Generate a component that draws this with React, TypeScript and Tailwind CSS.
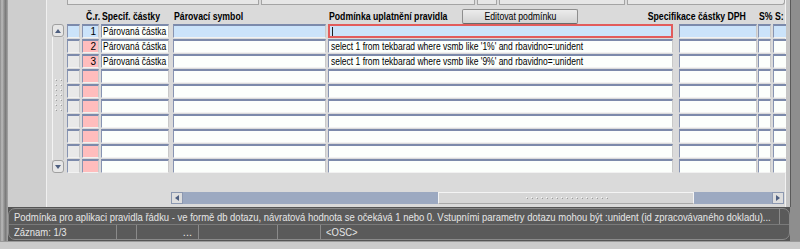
import React from 'react'

const font = "font-['Liberation_Sans',Arial,sans-serif]"

const rows = [
  { n: '1', spec: 'Párovaná částka', cond: '' },
  { n: '2', spec: 'Párovaná částka', cond: "select 1 from tekbarad where vsmb like '1%' and rbavidno=:unident" },
  { n: '3', spec: 'Párovaná částka', cond: "select 1 from tekbarad where vsmb like '9%' and rbavidno=:unident" },
  { n: '', spec: '', cond: '' },
  { n: '', spec: '', cond: '' },
  { n: '', spec: '', cond: '' },
  { n: '', spec: '', cond: '' },
  { n: '', spec: '', cond: '' },
  { n: '', spec: '', cond: '' },
  { n: '', spec: '', cond: '' },
]

const field = 'h-[14px] shrink-0 border-t-2 border-l border-b border-r border-t-[#7c8aab] border-l-[#8794b2] border-b-[#f2f2f2] border-r-[#c9c9c9] overflow-hidden whitespace-nowrap text-[10px] leading-[11px] text-black'

// the old client draws a narrow sans, so plain Arial metrics get squeezed
const N: React.FC<{ children: React.ReactNode; origin?: string; sx?: string }> = ({ children, origin = 'origin-left', sx = 'scale-x-[0.85]' }) => (
  <span className={`inline-block whitespace-nowrap ${sx} ${origin}`}>{children}</span>
)

const Arrow: React.FC<{ dir: 'up' | 'down' | 'left' | 'right' }> = ({ dir }) => {
  const d = {
    up: 'M0 4 L3 0 L6 4 Z',
    down: 'M0 0 L6 0 L3 4 Z',
    left: 'M4 0 L4 6 L0 3 Z',
    right: 'M0 0 L0 6 L4 3 Z',
  }[dir]
  const vb = dir === 'up' || dir === 'down' ? '0 0 6 4' : '0 0 4 6'
  const size = dir === 'up' || dir === 'down' ? 'w-[6px] h-[4px]' : 'w-[4px] h-[6px]'
  return (
    <svg viewBox={vb} className={size}>
      <path d={d} fill="#4e5f80" />
    </svg>
  )
}

const Grip: React.FC<{ className: string }> = ({ className }) => (
  <div className={`${className} bg-[radial-gradient(circle,#f8f8f8_0.8px,transparent_1px),radial-gradient(circle,#9c9c9c_0.8px,transparent_1px)] bg-[length:5px_5px,5px_5px] bg-[position:0_0,1px_1px]`} />
)

const TableRow: React.FC<{ r: typeof rows[number]; i: number }> = ({ r, i }) => {
  const sel = i === 0
  const blue = 'bg-[#cbe3fa]'
  return (
    <div className="flex h-[15px]">
      <div className={`${field} w-[13px] ${sel ? blue : 'bg-[#e9e9e9]'}`} />
      <div className={`${field} w-[17px] ml-[2px] text-right pr-[2px] ${sel ? blue : 'bg-[#ffbdbd]'}`}>{r.n}</div>
      <div className={`${field} w-[68px] ml-[2px] pl-[1px] bg-[#fcfffc]`}>{r.spec && <N>{r.spec}</N>}</div>
      <div className={`${field} w-[153px] ml-[4px] ${sel ? blue : 'bg-[#fcfffc]'}`} />
      {sel ? (
        <div className="h-[14px] w-[345px] ml-[2px] shrink-0 border-2 border-[#e25c5c] bg-[#cbe3fa] flex items-center pl-[2px]">
          <div className="w-[1px] h-[9px] bg-[#202020]" />
        </div>
      ) : (
        <div className={`${field} w-[345px] ml-[2px] pl-[2px] bg-[#fcfffc]`}>{r.cond && <N>{r.cond}</N>}</div>
      )}
      <div className={`${field} w-[78px] ml-[6px] ${sel ? blue : 'bg-[#fcfffc]'}`} />
      <div className={`${field} w-[13px] ml-[1px] ${sel ? blue : 'bg-[#fcfffc]'}`} />
      <div className={`${field} w-[14px] ml-[2px] ${sel ? blue : 'bg-[#fcfffc]'}`} />
    </div>
  )
}

const App: React.FC = () => {
  const hx = 'scale-x-[0.87]'
  const sx = 'scale-x-[0.86]'
  return (
    <div className={`${font} w-[800px] h-[249px] overflow-hidden flex flex-col bg-[#cbcbcb]`}>
      <div className="flex h-[207px]">
        <div className="w-[8px] bg-[linear-gradient(to_right,#8a8a8a,#bcbcbc_25%,#9a9a9a_45%,#7a7a7a_70%,#a8a8a8)]" />
        <div className="w-[39px] bg-[#cecece] border-r border-[#f0f0f0]" />
        <div className="w-[739px] bg-[#dadada] border-r border-[#f2f2f2] flex flex-col">
          <div className="flex h-[5px] pl-[20px]">
            <div className="w-[192px] border-b border-r border-l border-[#a4a4a4] bg-[#e6e6e6]" />
            <div className="w-[214px] ml-[2px] border-b border-r border-l border-[#a4a4a4] bg-[#e6e6e6]" />
            <div className="w-[20px] ml-[2px] border-b border-r border-l border-[#a4a4a4] bg-[#e6e6e6]" />
            <div className="w-[126px] ml-[2px] border-b border-r border-l border-[#a4a4a4] bg-[#e6e6e6]" />
            <div className="w-[158px] ml-[2px] border-b border-r border-l border-[#a4a4a4] bg-[#e6e6e6] rounded-br-[3px]" />
          </div>
          <div className="flex h-[15px] mt-[4px] pl-[21px] text-[10px] leading-[15px] font-bold text-black whitespace-nowrap">
            <div className="w-[13px] shrink-0" />
            <div className="w-[17px] ml-[2px] shrink-0 text-right"><N origin="origin-right" sx={hx}>Č.r.</N></div>
            <div className="w-[68px] ml-[2px] shrink-0"><N sx={hx}>Specif. částky</N></div>
            <div className="w-[153px] ml-[4px] shrink-0"><N sx={hx}>Párovací symbol</N></div>
            <div className="w-[345px] ml-[2px] shrink-0 flex">
              <span className="w-[133px] shrink-0"><N sx={hx}>Podmínka uplatnění pravidla</N></span>
              <button className="w-[116px] h-[15px] shrink-0 border border-[#8e8e8e] border-b-[#6a6a6a] rounded-[2px] bg-[linear-gradient(#ececec,#d2d2d2)] font-normal text-[10px] leading-[13px] text-black">
                <N origin="origin-center" sx={hx}>Editovat podmínku</N>
              </button>
            </div>
            <div className="w-[78px] ml-[6px] shrink-0 flex justify-end pr-[12px]">
              <N origin="origin-right" sx={hx}>Specifikace částky DPH</N>
            </div>
            <div className="w-[13px] ml-[1px] shrink-0 flex justify-center"><N origin="origin-center" sx={hx}>S%</N></div>
            <div className="w-[14px] ml-[2px] shrink-0 overflow-hidden pl-[1px]"><N sx={hx}>S:</N></div>
          </div>
          <div className="flex">
            <div className="w-[13px] ml-[5px] h-[149px] flex flex-col">
              <div className="h-[13px] rounded-[3px] border border-[#a0a0a0] bg-[#e6e6e6] flex items-center justify-center">
                <Arrow dir="up" />
              </div>
              <div className="flex-1 border-l border-[#f4f4f4] border-r border-r-[#c4c4c4] flex flex-col">
                <Grip className="h-[35px] w-[10px] mt-[40px]" />
              </div>
              <div className="h-[13px] rounded-[3px] border border-[#a0a0a0] bg-[#e6e6e6] flex items-center justify-center">
                <Arrow dir="down" />
              </div>
            </div>
            <div className="ml-[3px] flex flex-col">
              {rows.map((r, i) => (
                <TableRow key={i} r={r} i={i} />
              ))}
            </div>
          </div>
          <div className="flex h-[12px] mt-[18px] ml-[124px] w-[613px]">
            <div className="w-[12px] border border-[#8c98b0] bg-[#dedede] flex items-center justify-center">
              <Arrow dir="left" />
            </div>
            <div className="flex-1 bg-[#9ca9c1] flex">
              <div className="ml-[255px] w-[256px] bg-[#d6d6d6] border border-[#f4f4f4] border-b-[#a8a8a8] flex justify-center items-center">
                <Grip className="h-[7px] w-[84px]" />
              </div>
            </div>
            <div className="w-[12px] border border-[#8c98b0] bg-[#dedede] flex items-center justify-center">
              <Arrow dir="right" />
            </div>
          </div>
        </div>
        <div className="w-[4px] bg-[#c6c6c6]" />
        <div className="w-[10px] bg-[#8e8e8e] border-l border-[#5a5a5a]" />
      </div>
      <div className="h-[34px] bg-[#555555] flex">
        <div className="w-[8px] bg-[linear-gradient(to_right,#8a8a8a,#bcbcbc_25%,#9a9a9a_45%,#7a7a7a_70%,#a8a8a8)]" />
        <div className="w-[782px] mt-[1px] mb-[1px] rounded-[7px] border border-[#8a8a8a] bg-[#5a5a5a] flex flex-col text-[11px] text-[#e6e6e6] whitespace-nowrap">
          <div className="h-[16px] flex border-b border-[#7a7a7a]">
            <div className="w-[771px] pl-[5px] leading-[16px] border-r border-[#8a8a8a] overflow-hidden">
              <N sx={sx}>Podmínka pro aplikaci pravidla řádku - ve formě db dotazu, návratová hodnota se očekává 1 nebo 0. Vstupními parametry dotazu mohou být :unident (id zpracovávaného dokladu)...</N>
            </div>
          </div>
          <div className="h-[14px] flex leading-[14px]">
            <div className="w-[108px] pl-[5px] border-r border-[#8a8a8a]"><N sx={sx}>Záznam: 1/3</N></div>
            <div className="w-[20px] border-r border-[#8a8a8a]" />
            <div className="w-[62px] border-r border-[#8a8a8a] text-right pr-[6px]">...</div>
            <div className="w-[79px] border-r border-[#8a8a8a]" />
            <div className="w-[43px] border-r border-[#8a8a8a]" />
            <div className="pl-[5px]"><N sx={sx}>&lt;OSC&gt;</N></div>
          </div>
        </div>
        <div className="w-[10px] bg-[#8e8e8e]" />
      </div>
      <div className="flex-1 bg-[#cbcbcb] border-t border-[#9a9a9a]" />
    </div>
  )
}

export default App
